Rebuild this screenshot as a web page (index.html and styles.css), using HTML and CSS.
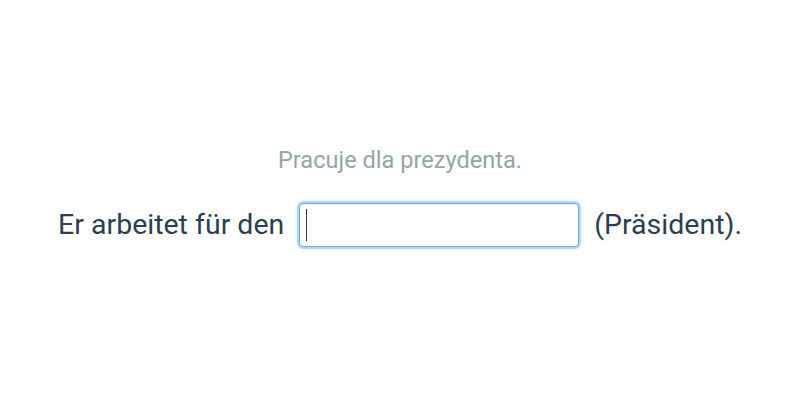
FILE: index.html
```html
<!DOCTYPE html>
<html lang="en">
<head>
    <meta charset="UTF-8">
    <title>Exercise</title>
    <link rel="stylesheet" href="styles.css">
</head>
<body>
    <div class="exercise">
        <p class="hint">Pracuje dla prezydenta.</p>
        <div class="sentence">
            <span>Er arbeitet für den</span>
            <span class="field">
                <input type="text" class="answer">
                <span class="caret"></span>
            </span>
            <span>(Präsident).</span>
        </div>
    </div>
</body>
</html>
```

FILE: styles.css
```css
body {
    margin: 0;
    font-family: Roboto, "Liberation Sans", sans-serif;
    background-color: #fff;
}

.exercise {
    height: 400px;
    box-sizing: border-box;
    padding-bottom: 8px;
    display: flex;
    flex-direction: column;
    align-items: center;
    justify-content: center;
}

.hint {
    margin: 0 0 29px 0;
    font-size: 23.6px;
    line-height: 28px;
    color: #95a5a6;
}

.sentence {
    display: flex;
    align-items: center;
    gap: 15px;
    font-size: 28.5px;
    color: #2c3e50;
}

.field {
    position: relative;
    display: inline-block;
}

.answer {
    display: block;
    width: 280px;
    height: 44px;
    box-sizing: border-box;
    border: 1px solid #66afe9;
    border-radius: 4px;
    box-shadow: inset 0 1px 1px rgba(0, 0, 0, 0.075), 0 0 0 2px rgba(102, 175, 233, 0.35), 0 0 5px rgba(102, 175, 233, 0.6);
    outline: none;
    font-size: 28px;
    padding: 0 6px;
}

.caret {
    position: absolute;
    left: 7px;
    top: 6px;
    width: 1px;
    height: 32px;
    background-color: #2c3e50;
}
```
